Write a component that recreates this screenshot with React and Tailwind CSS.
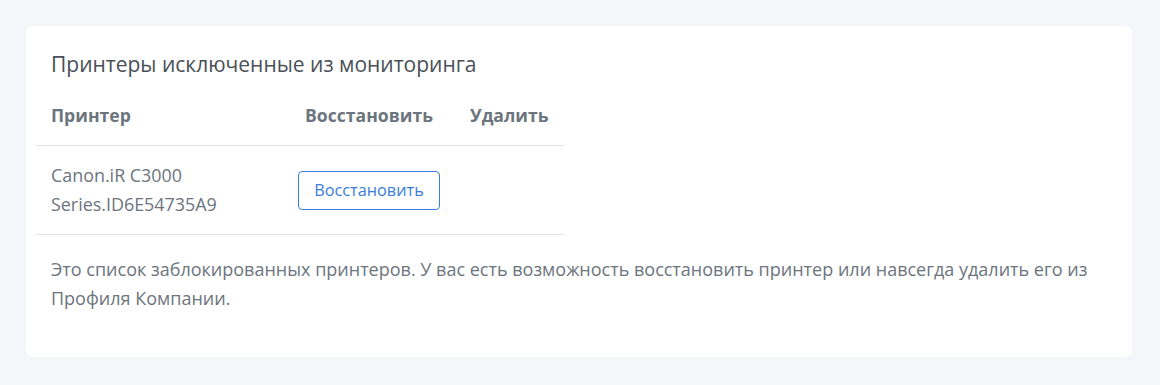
const printers = [{ id: 1, name: "Canon.iR C3000 Series.ID6E54735A9" }];

export default function App() {
  return (
    <div
      className="min-h-[385px] bg-[#f5f6fa] p-[26px] pr-[28px]"
      style={{ fontFamily: '"Open Sans", "Noto Sans", sans-serif' }}
    >
      <div className="rounded-md bg-white px-[10px] pt-6 pb-[44px] shadow-[0_0_2px_rgba(0,0,0,0.03)]">
        <h2 className="mb-[7px] px-[15px] text-[21px] leading-[28px] text-[#495057]">
          Принтеры исключенные из мониторинга
        </h2>
        <table className="w-[528px] table-fixed border-collapse text-[17.6px] text-[#6c757d]">
          <thead>
            <tr className="border-b border-[#dee2e6]">
              <th className="w-[254px] px-[15px] py-[18px] text-left font-bold leading-6">
                Принтер
              </th>
              <th className="w-[165px] px-[15px] py-[18px] text-left font-bold leading-6">
                Восстановить
              </th>
              <th className="w-[109px] px-[15px] py-[18px] text-left font-bold leading-6">
                Удалить
              </th>
            </tr>
          </thead>
          <tbody>
            {printers.map((p) => (
              <tr key={p.id} className="border-b border-[#dee2e6]">
                <td className="px-[15px] py-[15px] text-[17.9px] leading-[29px]">{p.name}</td>
                <td className="py-[15px] pl-2 text-left">
                  <button className="h-[39px] w-[142px] rounded border border-[#3b7ddd] text-[16.3px] text-[#3b7ddd]">
                    Восстановить
                  </button>
                </td>
                <td className="px-[15px] py-[15px]"></td>
              </tr>
            ))}
          </tbody>
        </table>
        <p className="mt-[20px] px-[15px] text-[18px] leading-[29px] text-[#6c757d]">
          Это список заблокированных принтеров. У вас есть возможность восстановить принтер или навсегда удалить его из Профиля Компании.
        </p>
      </div>
    </div>
  );
}
